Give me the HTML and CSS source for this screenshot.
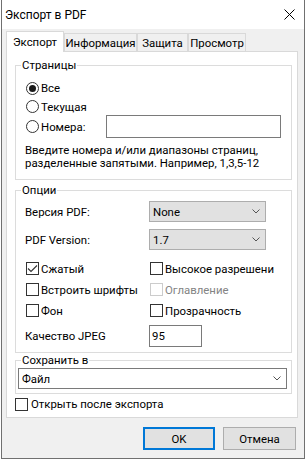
FILE: index.html
```html
<!DOCTYPE html>
<html lang="ru">
<head>
<meta charset="utf-8">
<title>Экспорт в PDF</title>
<link rel="stylesheet" href="styles.css">
</head>
<body>
<div class="window">
  <div class="titlebar">
    <span class="title">Экспорт в PDF</span>
    <svg class="close" width="11" height="11" viewBox="0 0 11 11"><path d="M0.5 0.5 L10.5 10.5 M10.5 0.5 L0.5 10.5" stroke="#000" stroke-width="1"/></svg>
  </div>
  <div class="client">
    <div class="tabs">
      <div class="tab tab-active tab-export">Экспорт</div>
      <div class="tab tab-info">Информация</div>
      <div class="tab tab-protect">Защита</div>
      <div class="tab tab-view">Просмотр</div>
    </div>
    <div class="panel">
      <fieldset class="group group-pages">
        <legend>Страницы</legend>
        <div class="radio-row row-all"><span class="radio radio-on"></span><span>Все</span></div>
        <div class="radio-row row-current"><span class="radio"></span><span>Текущая</span></div>
        <div class="radio-row row-numbers">
          <span class="radio"></span><span class="numbers-label">Номера:</span>
          <span class="textbox textbox-pages"></span>
        </div>
        <p class="hint">Введите номера и/или диапазоны страниц,<br>разделенные запятыми. Например, 1,3,5-12</p>
      </fieldset>

      <fieldset class="group group-options">
        <legend>Опции</legend>
        <div class="field-row">
          <span class="field-label">Версия PDF:</span>
          <span class="combo"><span>None</span><svg class="chev" width="8" height="5" viewBox="0 0 8 5"><polyline points="0.5,0.5 4,4 7.5,0.5" fill="none" stroke="#555" stroke-width="1"/></svg></span>
        </div>
        <div class="field-row field-row-second">
          <span class="field-label">PDF Version:</span>
          <span class="combo"><span>1.7</span><svg class="chev" width="8" height="5" viewBox="0 0 8 5"><polyline points="0.5,0.5 4,4 7.5,0.5" fill="none" stroke="#555" stroke-width="1"/></svg></span>
        </div>
        <div class="checks">
          <div class="check-row"><span class="box"><svg width="11" height="11" viewBox="0 0 11 11"><polyline points="1,5.5 4,8.5 10,2.5" fill="none" stroke="#333" stroke-width="1.1"/></svg></span><span class="check-text">Сжатый</span></div>
          <div class="check-row"><span class="box"></span><span class="check-text">Высокое разрешени</span></div>
          <div class="check-row"><span class="box"></span><span class="check-text">Встроить шрифты</span></div>
          <div class="check-row check-disabled"><span class="box"></span><span class="check-text">Оглавление</span></div>
          <div class="check-row"><span class="box"></span><span class="check-text">Фон</span></div>
          <div class="check-row"><span class="box"></span><span class="check-text">Прозрачность</span></div>
        </div>
        <div class="field-row jpeg-row">
          <span class="field-label">Качество JPEG</span>
          <span class="textbox textbox-jpeg">95</span>
        </div>
      </fieldset>

      <fieldset class="group group-save">
        <legend>Сохранить в</legend>
        <span class="combo combo-white"><span>Файл</span><svg class="chev" width="8" height="5" viewBox="0 0 8 5"><polyline points="0.5,0.5 4,4 7.5,0.5" fill="none" stroke="#555" stroke-width="1"/></svg></span>
      </fieldset>

      <div class="check-row open-after"><span class="box"></span><span class="check-text">Открыть после экспорта</span></div>
    </div>
    <div class="buttons">
      <button class="btn btn-default" type="button">OK</button>
      <button class="btn" type="button">Отмена</button>
    </div>
  </div>
</div>
</body>
</html>
```

FILE: styles.css
```css
* {
  box-sizing: border-box;
}

body {
  margin: 0;
  background: #ffffff;
  font-family: Roboto, "Liberation Sans", Arial, sans-serif;
  font-size: 11.4px;
  color: #000;
}

.window {
  margin-left: 1px;
  width: 304px;
  height: 459px;
  border: 1px solid #707070;
  border-top: none;
  display: flex;
  flex-direction: column;
  background: #f0f0f0;
}

.titlebar {
  height: 29px;
  flex: none;
  background: #fff;
  display: flex;
  align-items: center;
  justify-content: space-between;
  padding: 0 9px 0 3px;
}

.title {
  font-size: 12px;
}

.close {
  display: block;
  margin-top: -1px;
}

.client {
  flex: 1;
  padding: 2px 0 0 4px;
}

.tabs {
  display: flex;
  align-items: flex-end;
  height: 20px;
  position: relative;
  z-index: 1;
}

.tab {
  height: 18px;
  border: 1px solid #d9d9d9;
  border-bottom: none;
  background: #f0f0f0;
  display: flex;
  align-items: center;
  justify-content: center;
  padding-top: 1px;
  white-space: nowrap;
}

.tab-active {
  height: 21px;
  margin-bottom: -1px;
  background: #fff;
  padding-top: 0;
}

.tab-export { width: 58px; }
.tab-info { width: 73px; }
.tab-protect { width: 51px; }
.tab-view { width: 58px; }

.panel {
  width: 292px;
  height: 367px;
  background: #fff;
  border: 1px solid #d9d9d9;
  padding: 0 5px 0 8px;
}

.group {
  margin: 0;
  width: 277px;
  min-width: 0;
  border: 1px solid #dcdcdc;
  padding: 0 4px 0 10px;
}

.group legend {
  padding: 0 1px;
  margin-left: -5px;
  line-height: 14px;
}

.group-pages {
  margin-top: 6px;
  padding-top: 6px;
  padding-bottom: 9px;
}

.radio-row {
  display: flex;
  align-items: center;
  height: 20px;
}

.row-current { height: 17px; }
.row-numbers { height: 23px; }

.radio {
  width: 13px;
  height: 13px;
  border: 1px solid #333;
  border-radius: 50%;
  background: #fff;
  margin-right: 2px;
  display: flex;
  align-items: center;
  justify-content: center;
  flex: none;
}

.radio-on::after {
  content: "";
  width: 7px;
  height: 7px;
  border-radius: 50%;
  background: #1a1a1a;
}

.numbers-label {
  width: 65px;
}

.textbox {
  height: 23px;
  border: 1px solid #7a7a7a;
  background: #fff;
  display: flex;
  align-items: center;
  padding-left: 2px;
}

.textbox-pages {
  width: 175px;
}

.hint {
  margin: 6px 0 0 -1px;
  line-height: 13px;
}

.group-options {
  margin-top: 3px;
  padding-top: 4px;
  padding-bottom: 5px;
}

.field-row {
  display: flex;
  align-items: center;
  height: 21px;
}

.field-row-second {
  margin-top: 7px;
}

.field-label {
  width: 124px;
  margin-left: -1px;
  padding-right: 1px;
}

.combo {
  width: 117px;
  height: 21px;
  border: 1px solid #adadad;
  background: #e1e1e1;
  display: flex;
  align-items: center;
  justify-content: space-between;
  padding: 0 5px 0 3px;
}

.chev {
  display: block;
}

.checks {
  display: grid;
  grid-template-columns: 124px 117px;
  grid-auto-rows: 21px;
  margin-top: 8px;
}

.check-row {
  display: flex;
  align-items: center;
  white-space: nowrap;
}

.box {
  width: 13px;
  height: 13px;
  border: 1px solid #333;
  background: #fff;
  margin-right: 2px;
  flex: none;
  display: flex;
  align-items: center;
  justify-content: center;
}

.box svg {
  display: block;
}

.check-disabled .box {
  border-color: #cccccc;
}

.check-disabled .check-text {
  color: #838383;
}

.jpeg-row {
  height: 22px;
  margin-top: 4px;
}

.textbox-jpeg {
  width: 53px;
  height: 22px;
}

.group-save {
  padding: 1px 4px 4px 2px;
}

.group-save legend {
  margin-left: 3px;
}

.combo-white {
  width: 269px;
  background: #fff;
  border-color: #7a7a7a;
}

.open-after {
  height: 20px;
  margin-top: 0;
}

.open-after .box {
  margin-right: 3px;
}

.buttons {
  display: flex;
  justify-content: flex-end;
  gap: 8px;
  margin-top: 9px;
  padding-right: 8px;
}

.btn {
  width: 73px;
  height: 23px;
  margin: 0;
  border: 1px solid #adadad;
  background: #e1e1e1;
  font-family: inherit;
  font-size: 11.4px;
  color: #000;
  padding: 0;
}

.btn-default {
  width: 72px;
  border: 2px solid #0078d7;
}
```
